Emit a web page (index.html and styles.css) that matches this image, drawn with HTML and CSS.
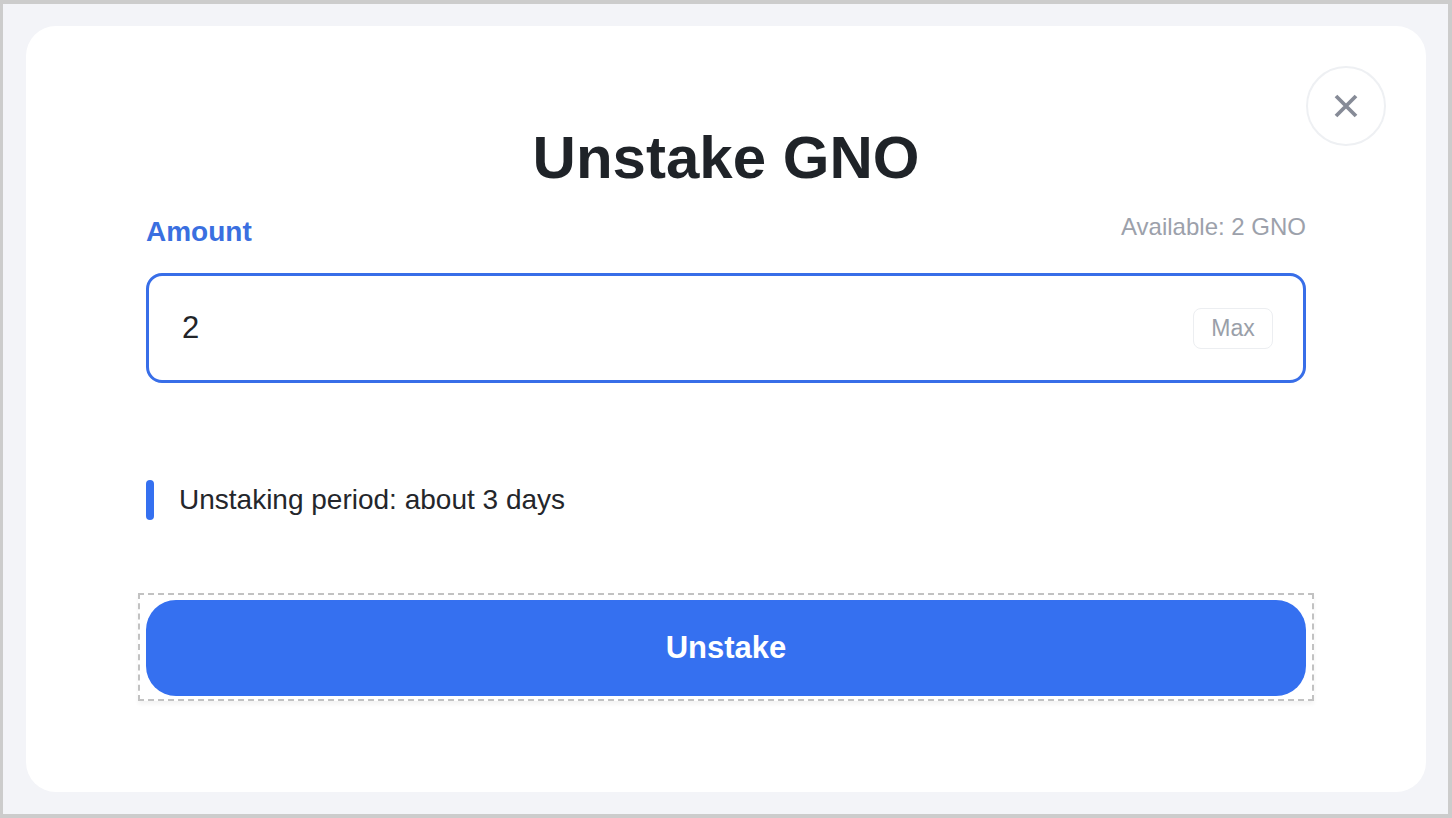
FILE: index.html
```html
<!DOCTYPE html>
<html lang="en">
<head>
<meta charset="utf-8">
<title>Unstake GNO</title>
<link rel="stylesheet" href="styles.css">
</head>
<body>
<div class="frame">
  <div class="card">
    <button class="close" type="button" aria-label="Close">
      <svg width="24" height="24" viewBox="0 0 24 24" fill="none" stroke="#868b97" stroke-width="3.8" stroke-linecap="butt">
        <path d="M2 2 L22 22 M22 2 L2 22"/>
      </svg>
    </button>
    <h1 class="title">Unstake GNO</h1>
    <div class="label-row">
      <span class="label">Amount</span>
      <span class="available">Available: 2 GNO</span>
    </div>
    <div class="input-box">
      <span class="value">2</span>
      <button class="max" type="button">Max</button>
    </div>
    <div class="info">
      <span class="info-bar"></span>
      <span class="info-text">Unstaking period: about 3 days</span>
    </div>
    <div class="action-wrap">
      <button class="action" type="button">Unstake</button>
    </div>
  </div>
</div>
</body>
</html>
```

FILE: styles.css
```css
* { box-sizing: border-box; }
html, body { margin: 0; padding: 0; }
body {
  font-family: "Liberation Sans", Arial, Helvetica, sans-serif;
  background: #f3f4f8;
}
.frame {
  width: 1452px;
  height: 818px;
  border-style: solid;
  border-color: #cccccc;
  border-width: 4px 4px 4px 3px;
  padding: 22px 22px 22px 23px;
  background: #f3f4f8;
}
.card {
  position: relative;
  height: 100%;
  background: #ffffff;
  border-radius: 30px;
  padding: 96px 120px 0 120px;
  display: flex;
  flex-direction: column;
}
.close {
  position: absolute;
  top: 40px;
  right: 40px;
  width: 80px;
  height: 80px;
  border-radius: 50%;
  border: 2px solid #eef0f3;
  background: #ffffff;
  display: flex;
  align-items: center;
  justify-content: center;
  padding: 0;
}
.title {
  margin: 0;
  text-align: center;
  font-size: 60px;
  line-height: 72px;
  font-weight: 700;
  color: #1f2328;
}
.label-row {
  margin-top: 19px;
  display: flex;
  justify-content: space-between;
  align-items: flex-start;
}
.label {
  padding-top: 3px;
  font-size: 28px;
  line-height: 32px;
  font-weight: 700;
  color: #3a6fe0;
}
.available {
  font-size: 24px;
  line-height: 28px;
  color: #9ca1ab;
}
.input-box {
  margin-top: 25px;
  height: 110px;
  border: 3px solid #386ee8;
  border-radius: 16px;
  display: flex;
  align-items: center;
  justify-content: space-between;
  padding: 0 30px 0 33px;
}
.value {
  font-size: 31px;
  color: #222428;
}
.max {
  width: 80px;
  height: 41px;
  border: 1px solid #eceef1;
  border-radius: 8px;
  background: #ffffff;
  font-family: "Liberation Sans", Arial, sans-serif;
  font-size: 23px;
  color: #9a9fa9;
  padding: 0;
}
.info {
  margin-top: 97px;
  display: flex;
  align-items: center;
  gap: 25px;
}
.info-bar {
  width: 8px;
  height: 40px;
  border-radius: 4px;
  background: #3570f0;
}
.info-text {
  font-size: 28px;
  line-height: 40px;
  color: #24262b;
}
.action-wrap {
  margin: 73px -8px 0 -8px;
  border: 2px dashed #c2c2c2;
  padding: 5px 6px 3px 6px;
  box-shadow: 0 3px 4px rgba(0,0,0,0.05);
}
.action {
  display: block;
  width: 100%;
  height: 96px;
  border: none;
  border-radius: 30px;
  background: #3570f0;
  color: #ffffff;
  font-family: "Liberation Sans", Arial, sans-serif;
  font-size: 31px;
  font-weight: 700;
  padding: 0;
}
```
